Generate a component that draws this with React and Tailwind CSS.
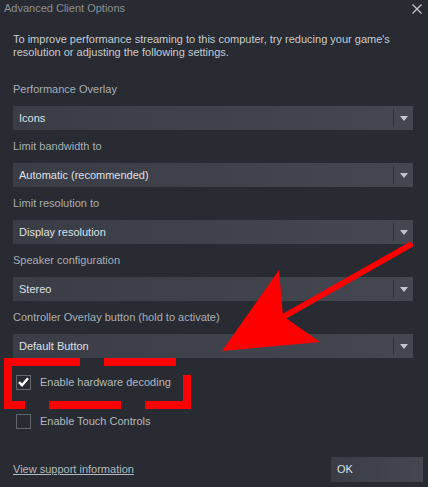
import { useState } from "react";

const fields = [
  { label: "Performance Overlay", value: "Icons" },
  { label: "Limit bandwidth to", value: "Automatic (recommended)" },
  { label: "Limit resolution to", value: "Display resolution" },
  { label: "Speaker configuration", value: "Stereo" },
  { label: "Controller Overlay button (hold to activate)", value: "Default Button" },
];

function Dropdown({ value }) {
  return (
    <div className="flex items-center h-6 bg-gradient-to-r from-[#3a3d45] to-[#44474f] text-[#dde1e6]">
      <span className="flex-1 pl-[6px] text-[11px] leading-4">{value}</span>
      <span className="w-px h-[18px] bg-[#2f3238]" />
      <span className="w-[19px] flex items-center justify-center">
        <svg width="8" height="5" viewBox="0 0 8 5">
          <path d="M0 0h8L4 5z" fill="#c2c6cc" />
        </svg>
      </span>
    </div>
  );
}

function Check({ checked, label, onToggle }) {
  return (
    <div className="flex items-center h-4 pl-[3px] cursor-pointer" onClick={onToggle}>
      <span className="w-[15px] h-[15px] border border-[#62666d] flex items-center justify-center">
        {checked && (
          <svg width="11" height="10" viewBox="0 0 11 10">
            <path d="M1 5.2l3 3 6-7" fill="none" stroke="#ffffff" strokeWidth="2.4" />
          </svg>
        )}
      </span>
      <span className="ml-[9px] text-[11px] text-[#b4b9bf]">{label}</span>
    </div>
  );
}

export default function App() {
  const [hw, setHw] = useState(true);
  const [touch, setTouch] = useState(false);

  return (
    <div
      className="relative w-[428px] h-[487px] overflow-hidden bg-[#282b31] text-[#b4b9bf]"
      style={{ fontFamily: '"Liberation Sans", Arial, sans-serif' }}
    >
      {/* title bar */}
      <div className="flex items-center justify-between h-[17px] pl-1 pr-[6px]">
        <span className="text-[11px] text-[#8a9098]">Advanced Client Options</span>
        <svg width="10" height="10" viewBox="0 0 10 10">
          <path d="M0.5 0.5l9 9M9.5 0.5l-9 9" stroke="#c3c7cc" strokeWidth="1.3" />
        </svg>
      </div>

      <div className="px-[13px] pr-[15px]">
        <p className="mt-[16px] text-[11px] leading-[13px] text-[#c7cbd1]">
          To improve performance streaming to this computer, try reducing your game's resolution or adjusting the following settings.
        </p>

        <div className="mt-[22px]">
          {fields.map((f) => (
            <div key={f.label} className="pb-2">
              <div className="h-4 leading-4 text-[11px] text-[#a9aeb5]">{f.label}</div>
              <div className="mt-[9px]">
                <Dropdown value={f.value} />
              </div>
            </div>
          ))}
        </div>

        <div className="mt-[8px] flex flex-col gap-[23px]">
          <Check checked={hw} label="Enable hardware decoding" onToggle={() => setHw((v) => !v)} />
          <Check checked={touch} label="Enable Touch Controls" onToggle={() => setTouch((v) => !v)} />
        </div>

        <div className="mt-[28px] flex items-center justify-between">
          <span className="text-[11px] underline text-[#b4b9bf]">View support information</span>
          <button className="w-[92px] h-[25px] -mr-[10px] text-left pl-[6px] text-[11px] text-[#dde1e6] bg-gradient-to-r from-[#3a3d45] to-[#44474f]">
            OK
          </button>
        </div>
      </div>

      {/* red annotations drawn over the dialog */}
      <svg className="absolute inset-0 pointer-events-none" width="428" height="487" viewBox="0 0 428 487">
        <g fill="#ff0000">
          <rect x="4" y="358" width="76" height="8" />
          <rect x="104" y="358" width="72" height="8" />
          <rect x="4" y="358" width="8" height="51" />
          <rect x="4" y="401" width="21" height="8" />
          <rect x="49" y="401" width="72" height="8" />
          <rect x="145" y="401" width="46" height="8" />
          <rect x="183" y="375" width="8" height="34" />
          <path d="M222 351 L279 270 L283 316 L320 342 Z" />
        </g>
        <path d="M410 245 L276 321" stroke="#ff0000" strokeWidth="6" strokeLinecap="round" />
      </svg>
    </div>
  );
}
